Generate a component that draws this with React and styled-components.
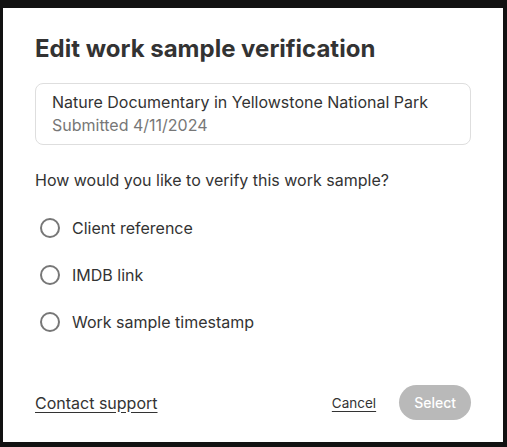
import React, { useState } from "react";
import styled, { createGlobalStyle } from "styled-components";

const GlobalStyle = createGlobalStyle`
  html, body {
    margin: 0;
    background: #121212;
  }
  body {
    padding: 8px 4px 5px 3px;
    font-family: Inter, "Noto Sans", sans-serif;
  }
`;

const options = ["Client reference", "IMDB link", "Work sample timestamp"];

export default () => {
  const [picked, setPicked] = useState(null);
  return (
    <>
      <GlobalStyle />
      <Modal>
        <Title>Edit work sample verification</Title>
        <SampleCard>
          <SampleName>Nature Documentary in Yellowstone National Park</SampleName>
          <SampleDate>Submitted 4/11/2024</SampleDate>
        </SampleCard>
        <Question>How would you like to verify this work sample?</Question>
        <OptionList>
          {options.map((o) => (
            <OptionRow key={o} onClick={() => setPicked(o)}>
              <Radio checked={picked === o} />
              <span>{o}</span>
            </OptionRow>
          ))}
        </OptionList>
        <Footer>
          <SupportLink href="#">Contact support</SupportLink>
          <Actions>
            <CancelLink href="#">Cancel</CancelLink>
            <SelectButton disabled={!picked}>Select</SelectButton>
          </Actions>
        </Footer>
      </Modal>
    </>
  );
};

const Modal = styled.div`
  box-sizing: border-box;
  width: 500px;
  height: 434px;
  background: #fff;
  padding: 27px 32px 22px 32px;
  display: flex;
  flex-direction: column;
`;

const Title = styled.h2`
  margin: 0;
  font-size: 24px;
  line-height: 28px;
  font-weight: 700;
  color: #333;
`;

const SampleCard = styled.div`
  margin-top: 20px;
  border: 1px solid #dedede;
  border-radius: 8px;
  padding: 7px 16px;
  display: flex;
  flex-direction: column;
`;

const SampleName = styled.span`
  font-size: 16px;
  line-height: 23px;
  color: #333;
`;

const SampleDate = styled.span`
  font-size: 16px;
  line-height: 23px;
  color: #777;
`;

const Question = styled.p`
  margin: 24px 0 0;
  font-size: 16px;
  line-height: 22px;
  color: #333;
`;

const OptionList = styled.div`
  margin-top: 25px;
  display: flex;
  flex-direction: column;
  gap: 23px;
`;

const OptionRow = styled.label`
  display: flex;
  align-items: center;
  gap: 12px;
  padding-left: 5px;
  font-size: 16px;
  line-height: 24px;
  color: #333;
  cursor: pointer;
`;

const Radio = styled.span`
  box-sizing: border-box;
  width: 20px;
  height: 20px;
  border-radius: 50%;
  border: 2px solid #777;
  box-shadow: ${(p) => (p.checked ? "inset 0 0 0 4px #fff" : "none")};
  background: ${(p) => (p.checked ? "#333" : "#fff")};
`;

const Footer = styled.div`
  margin-top: auto;
  display: flex;
  align-items: center;
  justify-content: space-between;
`;

const SupportLink = styled.a`
  font-size: 16px;
  color: #333;
  text-decoration: underline;
  text-underline-offset: 3px;
`;

const Actions = styled.div`
  display: flex;
  align-items: center;
  gap: 23px;
`;

const CancelLink = styled.a`
  font-size: 13.5px;
  color: #333;
  text-decoration: underline;
  text-underline-offset: 3px;
`;

const SelectButton = styled.button`
  height: 35px;
  padding: 0 15px;
  border: none;
  border-radius: 18px;
  background: ${(p) => (p.disabled ? "#b9b9b9" : "#333")};
  color: #fff;
  font-family: inherit;
  font-size: 14px;
  font-weight: 500;
`;
